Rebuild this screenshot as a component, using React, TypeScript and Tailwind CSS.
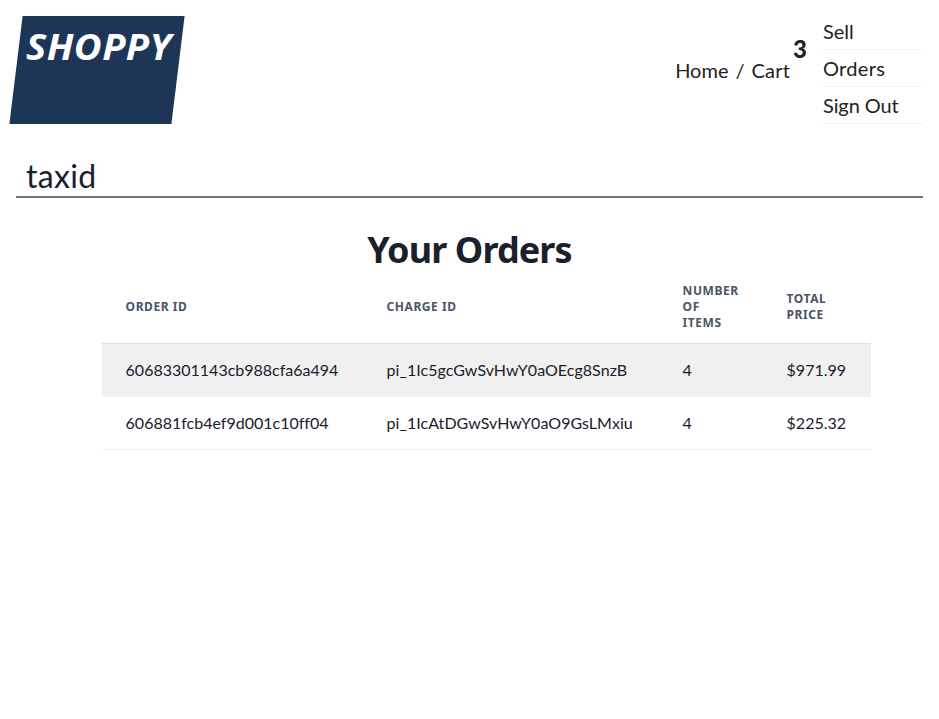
const orders = [
  { id: '60683301143cb988cfa6a494', charge: 'pi_1Ic5gcGwSvHwY0aOEcg8SnzB', items: 4, total: '$971.99' },
  { id: '606881fcb4ef9d001c10ff04', charge: 'pi_1IcAtDGwSvHwY0aO9GsLMxiu', items: 4, total: '$225.32' },
];

export default function App() {
  return (
    <div className="min-h-screen bg-white font-['Lato',sans-serif] text-[#1a202c]">
      <header className="flex h-[140px] justify-between px-4 pt-4">
        <div className="relative h-[108px] w-[162px]">
          <div className="absolute inset-0 -skew-x-[7deg] bg-[#1d3557]" />
          <div className="relative whitespace-nowrap pl-[10px] pt-[4px] font-['Noto_Sans',sans-serif] text-[35px] font-bold italic leading-[54px] text-white">
            <span className="inline-block origin-left scale-x-[1.09] tracking-[0.4px]">SHOPPY</span>
          </div>
        </div>
        <nav className="flex text-xl text-[#222]">
          <div className="flex pt-[39px] leading-[30px]">
            <span>Home</span>
            <span className="px-[7px]">/</span>
            <span className="tracking-[0.2px]">Cart</span>
          </div>
          <span className="ml-[3px] mr-[16px] mt-[18px] text-2xl font-black leading-[30px]">3</span>
          <div className="w-[100px]">
            <div className="h-[34px] border-b border-[#edf2f7] leading-[30px]">Sell</div>
            <div className="h-[37px] border-b border-[#edf2f7] pt-[3px] leading-[30px] tracking-[0.3px]">Orders</div>
            <div className="h-[37px] border-b border-[#edf2f7] pt-[3px] leading-[30px] tracking-[-0.1px]">Sign Out</div>
          </div>
        </nav>
      </header>
      <div className="mx-4 h-[58px] border-b-2 border-[#767676] pl-[10px] pt-[12px] text-[32px] leading-[48px] tracking-[0.3px]">taxid</div>
      <main>
        <h1 className="mt-[25px] text-center font-['Noto_Sans',sans-serif] text-[36px] font-bold leading-[54px] tracking-[-0.9px]">Your Orders</h1>
        <table className="ml-[102px] w-[769px] table-fixed border-collapse text-left text-base [font-variant-ligatures:none]">
          <colgroup><col className="w-[261px]" /><col className="w-[296px]" /><col className="w-[104px]" /><col className="w-[108px]" /></colgroup>
          <thead>
            <tr className="h-[66px] border-b border-[#e0e0e0] font-['Noto_Sans',sans-serif] text-xs leading-4 tracking-[0.55px] text-[#4a5568]">
              {['ORDER ID', 'CHARGE ID', 'NUMBER OF ITEMS', 'TOTAL PRICE'].map((t) => (
                <th key={t} className="pb-[5px] pl-[23.6px] pr-6 font-bold">{t}</th>
              ))}
            </tr>
          </thead>
          <tbody>
            {orders.map((o) => (
              <tr key={o.id} className="h-[53px] border-b border-[#eee] odd:bg-[#f0f0f0]">
                <td className="pl-[23.6px]">{o.id}</td>
                <td className="pl-[23.6px] tracking-[0.05px]">{o.charge}</td>
                <td className="pl-[23.6px]">{o.items}</td>
                <td className="pl-[23.6px]">{o.total}</td>
              </tr>
            ))}
          </tbody>
        </table>
      </main>
    </div>
  );
}
